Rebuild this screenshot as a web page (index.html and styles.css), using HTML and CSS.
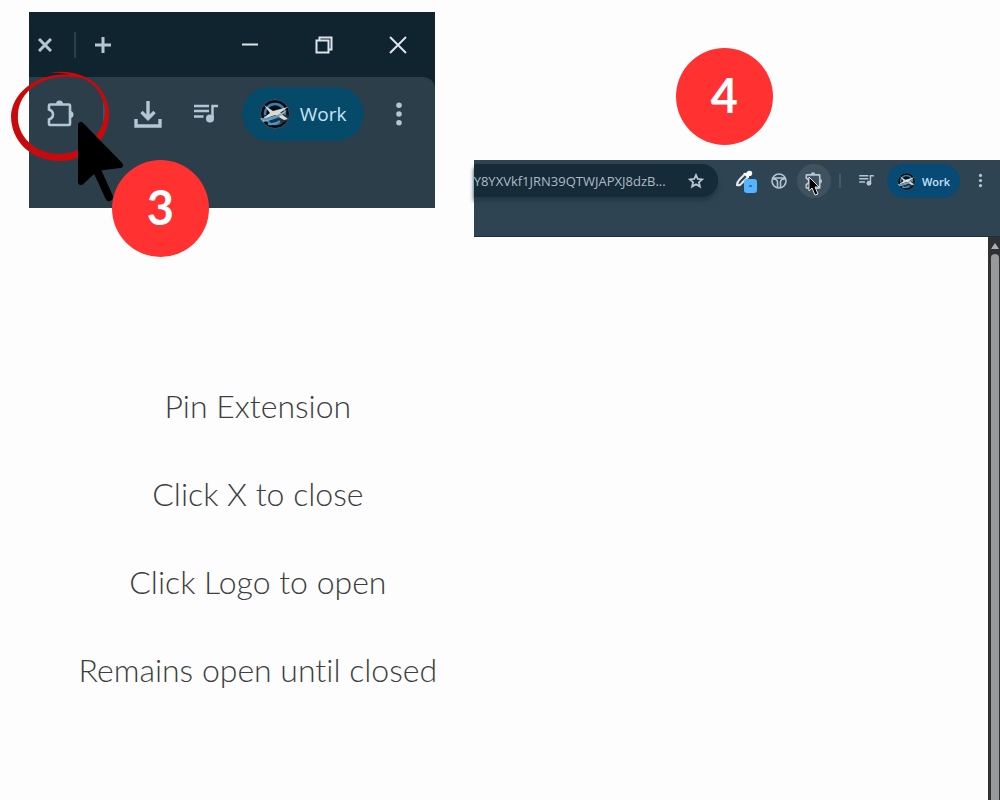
FILE: index.html
```html
<!DOCTYPE html>
<html lang="en">
<head>
  <meta charset="UTF-8" />
  <meta name="viewport" content="width=device-width, initial-scale=1.0" />
  <title>Pin Extension</title>
  <link rel="stylesheet" href="styles.css">
</head>
<body>

  <!-- shared icons -->
  <svg class="sprite" aria-hidden="true">
    <symbol id="puzzle" viewBox="0 0 28 28">
      <path d="M3 4.500h19q1 0 1 1V24q0 1-1 1H3q-1 0-1-1v-4.500q4-1.500 4-5T2 9.500V5.500q0-1 1-1z" fill="none" stroke="currentColor" stroke-width="2.600" />
      <path d="M9 4a3.500 3.500 0 0 1 7 0zM23 11a3.500 3.500 0 0 1 0 7z" fill="currentColor" />
    </symbol>
    <symbol id="queue" viewBox="0 0 28 28">
      <path d="M2 6h15M2 11h15M2 16.500h9.500M20.500 18V6H26" fill="none" stroke="currentColor" stroke-width="2.500" />
      <circle cx="18" cy="18.500" r="4" fill="currentColor" />
    </symbol>
    <symbol id="dots" viewBox="0 0 28 28">
      <circle cx="14" cy="4.500" r="3" fill="currentColor" />
      <circle cx="14" cy="14" r="3" fill="currentColor" />
      <circle cx="14" cy="23.500" r="3" fill="currentColor" />
    </symbol>
    <symbol id="avatar" viewBox="0 0 32 32">
      <circle cx="16" cy="16" r="14.500" fill="#080d12" stroke="#40505c" />
      <circle cx="16" cy="16" r="10" fill="none" stroke="#397fae" stroke-width="2.500" />
      <path d="M4 17h25v5q-7 5-17 3z" fill="#203440" />
      <path d="M5 7l9 6 15-4-8 6 8 6-4 1-9-5-14 5 9-7z" fill="#dadbd9" />
      <path d="M1 20q8 1 17-3l10-5q-5 8-24 12z" fill="#a0adb4" />
      <path d="M3 21q9 1 17-3M9 26q7 1 12-3" fill="none" stroke="#4c99cc" stroke-width="2" />
    </symbol>
  </svg>

  <main class="guide">
    <section class="left">
      <div class="shot">
        <div class="window">
          <div class="titlebar">
            <button class="tab-btn" aria-label="Close tab">
              <svg viewBox="0 0 14 14" width="14" height="14"><path d="M1 1l12 12M13 1L1 13" /></svg>
            </button>
            <span class="divider"></span>
            <button class="tab-btn new-tab" aria-label="New tab">
              <svg viewBox="0 0 18 18" width="18" height="18"><path d="M9 1v16M1 9h16" /></svg>
            </button>
            <div class="controls">
              <button aria-label="Minimize">
                <svg viewBox="0 0 18 18" width="18" height="18"><path d="M1 8.500h16" /></svg>
              </button>
              <button aria-label="Restore">
                <svg viewBox="0 0 18 18" width="18" height="18"><path d="M1.500 4.500h12v12h-12zM4.500 4V1.500h12v12H14" /></svg>
              </button>
              <button aria-label="Close">
                <svg viewBox="0 0 18 18" width="18" height="18"><path d="M1 1l16 16M17 1L1 17" /></svg>
              </button>
            </div>
          </div>
          <div class="toolbar">
            <button class="tool" aria-label="Extensions"><svg width="28" height="28"><use href="#puzzle" /></svg></button>
            <span class="divider faint"></span>
            <button class="tool" aria-label="Downloads">
              <svg viewBox="0 0 28 28" width="28" height="28"><path d="M14 1v17M7.500 12l6.500 6.500 6.500-6.500M2 19v7h24v-7" fill="none" stroke="currentColor" stroke-width="3.400" /></svg>
            </button>
            <button class="tool" aria-label="Media"><svg width="28" height="28"><use href="#queue" /></svg></button>
            <button class="profile"><svg width="32" height="32"><use href="#avatar" /></svg>Work</button>
            <button class="menu" aria-label="Menu"><svg width="26" height="26"><use href="#dots" /></svg></button>
          </div>
        </div>

        <svg class="marker" viewBox="0 0 140 210" width="140" height="210" aria-hidden="true">
          <path d="M50 72.500C82 68 106 84 109 110C111 139 87 161 60 161C31 161 11 141 11 116C12 94 34 75 63 74.500C76 74 82 77 80 78C49 72 20 87 18 114C16 136 35 154 60 154C86 153 105 133 105 110C102 84 83 73 50 72.500Z" fill="#c90a0d" />
          <path d="M81 125v57l14-13 14 28-13-29 24-3z" fill="#000" stroke="#000" stroke-width="6" stroke-linejoin="round" />
          <path d="M97 170l12 27" stroke="#000" stroke-width="8" stroke-linecap="round" />
        </svg>
        <span class="badge badge-three">3</span>
      </div>

      <ul class="steps">
        <li>Pin Extension</li>
        <li>Click X to close</li>
        <li>Click Logo to open</li>
        <li>Remains open until closed</li>
      </ul>
    </section>

    <section class="right">
      <div class="badge-row"><span class="badge">4</span></div>
      <div class="browser">
        <div class="browser-bar">
          <div class="address">
            <input type="text" aria-label="Address" value="Y8YXVkf1JRN39QTWJAPXJ8dzB..." />
            <button aria-label="Bookmark">
              <svg viewBox="0 0 16 16" width="16" height="16"><path d="M8 2l1.800 4 4.400.4-3.300 2.900 1 4.300L8 11.300l-3.900 2.300 1-4.300-3.300-2.900 4.400-.4z" fill="none" stroke="currentColor" stroke-width="1.800" /></svg>
            </button>
          </div>
          <button class="ext" aria-label="Color picker">
            <svg viewBox="0 0 24 24" width="24" height="24">
              <path d="M2 16q0-3 3-6l5-5 3 3-6 6q-2 3-5 2z" fill="none" stroke="#e4edf2" stroke-width="2" />
              <path d="M8 4h3l2-2q3-1 4 1t-1 4h-2v2z" fill="#fff" />
              <rect x="9" y="10" width="13" height="14" rx="3" fill="#56b4ff" />
              <path d="M14 17h3" stroke="#2d78bd" stroke-width="2" />
            </svg>
          </button>
          <button class="ext" aria-label="Extension">
            <svg viewBox="0 0 16 16" width="16" height="16" fill="none" stroke="currentColor" stroke-width="1.600"><circle cx="8" cy="8" r="7" /><path d="M2 5h12M2 6q4.500 0 4.500 3v5.500M14 6q-4.500 0-4.500 3v5.500" /></svg>
          </button>
          <button class="ext active" aria-label="Extensions">
            <svg width="18" height="18"><use href="#puzzle" /></svg>
            <svg class="pointer" viewBox="0 0 12 20" width="12" height="20"><path d="M1 1v14l3-3 3 7 3-1-3-7h4z" fill="#000" stroke="#dce2e5" /></svg>
          </button>
          <span class="divider small"></span>
          <button class="media" aria-label="Media"><svg width="17" height="17"><use href="#queue" /></svg></button>
          <button class="profile compact"><svg width="19" height="19"><use href="#avatar" /></svg>Work</button>
          <button class="menu compact-menu" aria-label="Menu"><svg width="15" height="15"><use href="#dots" /></svg></button>
        </div>
        <div class="page">
          <div class="scrollbar">
            <svg viewBox="0 0 8 6" width="8" height="6"><path d="M4 0l4 6H0z" fill="#b0b1b3" /></svg>
            <span class="thumb"></span>
          </div>
        </div>
      </div>
    </section>
  </main>

</body>
</html>
```
FILE: styles.css
```css
* {
  box-sizing: border-box;
}

body {
  margin: 0;
  background: #fdfdfd;
  font-family: "Open Sans", "Noto Sans", sans-serif;
}

button {
  display: flex;
  align-items: center;
  justify-content: center;
  padding: 0;
  border: none;
  background: none;
  color: #b4c6d3;
  font-family: inherit;
  cursor: pointer;
}

svg {
  flex-shrink: 0;
}

.sprite {
  position: absolute;
  width: 0;
  height: 0;
}

.guide {
  display: grid;
  grid-template-columns: 9fr 10fr;
  min-height: 100vh;
}

.shot {
  position: relative;
  padding: 12px 39px 0 29px;
}

.window {
  background: #10242f;
}

.titlebar {
  display: flex;
  align-items: center;
  height: 65px;
  padding-left: 5px;
}

.tab-btn {
  width: 22px;
  height: 22px;
}

.titlebar svg {
  fill: none;
  stroke: #dce4e9;
  stroke-width: 2;
}

.titlebar .tab-btn svg {
  stroke: #b4c6d3;
  stroke-width: 3;
}

.divider {
  width: 2px;
  height: 26px;
  margin: 0 16px 0 18px;
  background: #2b3f4b;
}

.controls {
  display: flex;
  margin-left: auto;
}

.controls button {
  width: 74px;
  height: 65px;
}

.toolbar {
  display: flex;
  align-items: flex-start;
  height: 131px;
  padding: 10px 0 0 3px;
  border-radius: 0 12px 0 0;
  background: #2c3e4a;
}

.tool {
  width: 58px;
  height: 54px;
}

.divider.faint {
  height: 22px;
  margin: 16px auto;
  background: #3d5562;
}

.profile {
  gap: 9px;
  width: 122px;
  height: 54px;
  margin-left: 7px;
  border-radius: 27px;
  background: #064a69;
  color: #c8e5f8;
  font-size: 19px;
  font-weight: 500;
}

.menu {
  width: 71px;
  height: 54px;
}

.marker {
  position: absolute;
  top: 0;
  left: 0;
}

.badge {
  display: flex;
  align-items: center;
  justify-content: center;
  width: 97px;
  height: 97px;
  padding-bottom: 4px;
  border-radius: 50%;
  background: #ff3131;
  color: #fff;
  font-family: Lato, sans-serif;
  font-size: 47px;
  font-weight: 700;
}

.badge-three {
  position: absolute;
  top: 160px;
  left: 112px;
}

.steps {
  margin: 154px 0 0;
  padding: 0 0 0 42px;
  list-style: none;
  color: #3c3e40;
  font-family: Lato, sans-serif;
  font-size: 32px;
  font-weight: 300;
  font-variant-ligatures: none;
  line-height: 88px;
  text-align: center;
}

.right {
  display: flex;
  flex-direction: column;
}

.badge-row {
  display: flex;
  justify-content: center;
  padding: 48px 25px 15px 0;
}

.browser {
  display: flex;
  flex: 1;
  flex-direction: column;
}

.browser-bar {
  display: flex;
  align-items: flex-start;
  height: 77px;
  padding-top: 4px;
  border-bottom: 1px solid #1c303d;
  background: #2e4452;
}

.address {
  display: flex;
  flex: 1;
  align-items: center;
  min-width: 0;
  height: 33px;
  margin-right: 15px;
  padding-right: 14px;
  border-radius: 0 16px 16px 0;
  background: #152b38;
  box-shadow: 0 4px 4px #20384a;
}

.address input {
  flex: 1;
  min-width: 0;
  padding: 0;
  border: none;
  outline: none;
  background: none;
  color: #aebbc6;
  font-family: inherit;
  font-size: 13px;
}

.ext {
  position: relative;
  width: 28px;
  height: 34px;
  margin-right: 4px;
}

.ext.active {
  width: 34px;
  margin: 0;
  border-radius: 50%;
  background: #41525f;
}

.pointer {
  position: absolute;
  top: 12px;
  left: 11px;
}

.divider.small {
  height: 14px;
  margin: 10px 4px 0 8px;
  background: #425b6a;
}

.media {
  width: 42px;
  height: 33px;
}

.profile.compact {
  gap: 6px;
  width: 73px;
  height: 34px;
  margin: 0;
  border-radius: 17px;
  background: #064a75;
  font-size: 11px;
  font-weight: 600;
}

.compact-menu {
  width: 40px;
  height: 33px;
}

.page {
  display: flex;
  flex: 1;
  justify-content: flex-end;
}

.scrollbar {
  display: flex;
  flex-direction: column;
  align-items: center;
  gap: 5px;
  width: 12px;
  padding: 6px 0 0 2px;
  background: #303133;
}

.thumb {
  flex: 1;
  width: 8px;
  border-radius: 4px 4px 0 0;
  background: #98999b;
}
```
